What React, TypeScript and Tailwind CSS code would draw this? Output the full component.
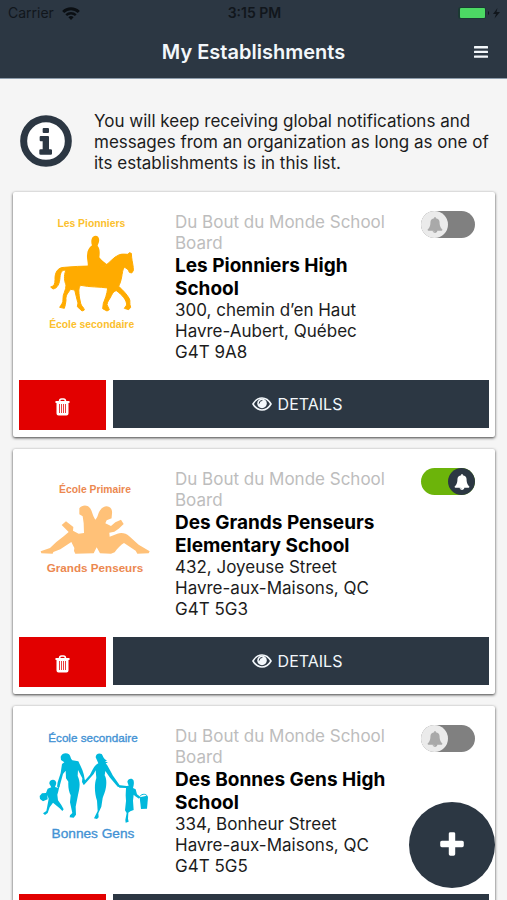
import React, { useState } from "react";

interface Establishment {
  id: string;
  board: string;
  name: string;
  street: string;
  city: string;
  postalCode: string;
  notify: boolean;
  logo: () => React.ReactElement;
}

function PionniersLogo() {
  return (
    <svg viewBox="69 87 360 360" className="w-30 h-30" role="img" aria-label="Les Pionniers">
      <g fill="#fbc02d" fontFamily="Liberation Sans, Arial, sans-serif" fontWeight="bold" fontSize="31" textAnchor="middle">
        <text x="244" y="126">Les Pionniers</text>
        <text x="245" y="429">École secondaire</text>
      </g>
      <g fill="#ffab00">
        {/* Rider */}
        <path d="M256 152C266 152 269 161 267 170C266 176 263 178 263 183C270 190 270 204 268 217C274 226 283 231 290 237L284 244L232 246C236 236 230 226 231 211C232 196 237 187 246 181C242 172 243 153 256 152Z" />
        {/* Horse */}
        <path d="M122 306C132 304 135 297 135 284C134 263 143 247 163 247C190 245 215 243 240 243L268 243L282 244C300 234 308 217 328 209C338 206 347 208 354 208L358 203L364 205L365 217C366 230 371 245 370 257L365 264L358 262C356 255 350 249 343 247C338 252 337 265 335 276C333 287 330 296 326 304C339 316 350 327 358 341C362 349 357 354 362 367L356 374L343 370L350 360C350 345 337 330 319 317C313 317 308 324 304 332C300 342 292 348 291 359L298 374L291 378L278 371L280 355C285 342 291 328 293 309C268 305 240 307 212 301C204 310 207 321 208 336L212 355C213 363 222 367 223 375L216 378L202 365L204 354C200 342 197 326 194 315L182 313C174 323 166 332 168 346L166 359L163 370L149 367C153 359 160 354 159 342C157 329 169 315 168 300C163 288 161 273 167 257C157 252 151 263 150 277C149 295 143 310 129 312Z" stroke="#ffab00" strokeWidth="3" strokeLinejoin="round" />
      </g>
    </svg>
  );
}

function PenseursLogo() {
  return (
    <svg viewBox="69 78 360 360" className="w-30 h-30" role="img" aria-label="Grands Penseurs">
      <g fill="#ec8850" fontFamily="Liberation Sans, Arial, sans-serif" fontWeight="bold" textAnchor="middle">
        <text x="255" y="144" fontSize="31">École Primaire</text>
        <text x="255" y="381" fontSize="35">Grands Penseurs</text>
      </g>
      {/* Two readers sitting back to back */}
      <path
        fill="#ffc178"
        d="M208 190C216 179 232 179 239 188C247 197 247 211 256 224C265 216 263 205 271 195C281 181 297 181 304 192C309 202 304 212 305 220L290 226L286 235L303 243L316 232L333 224L341 237L326 251L313 260L298 263L299 275L322 266C335 262 349 265 357 273L386 299L419 319L416 325L382 326L377 317L342 294C333 299 323 309 314 322L303 326L270 325L260 307L251 325L196 326L192 318L193 309L184 291L151 313L130 321L128 326L94 325L92 319L120 309L139 291L162 273L176 261L155 240L168 229L190 246L189 257L206 266L222 264L221 235L218 214L208 208Z"
      />
    </svg>
  );
}

function BonnesGensLogo() {
  return (
    <svg viewBox="69 84 360 360" className="w-30 h-30" role="img" aria-label="Bonnes Gens">
      <g fill="#4292d4" stroke="#4292d4" fontFamily="Liberation Sans, Arial, sans-serif" textAnchor="middle">
        <text x="249" y="125" fontSize="35">École secondaire</text>
        <text x="249" y="415" fontSize="41">Bonnes Gens</text>
      </g>
      <g fill="#00b8dc">
        {/* Father */}
        <path d="M152 170C156 159 169 157 177 163C183 169 181 177 187 181L205 184C213 200 222 217 224 238L228 247L221 255L216 246L217 235L204 210L203 228C213 250 208 266 204 285L197 320L198 344L191 353L179 352L180 346L187 339L180 307L182 286C177 275 174 263 175 245L168 235L167 212L159 222L148 262L141 260L143 247L152 219L156 192L163 187L153 180Z" />
        {/* Mother */}
        <path d="M257 172C257 162 266 158 275 162C281 170 280 178 292 181L285 184L294 188L287 190C293 197 300 210 308 226L328 254L330 262L323 260L299 232L286 213L284 226C289 234 290 246 288 261C286 276 280 287 278 294L274 320L265 340L266 352L261 357L252 355L263 333L261 302C253 277 253 252 259 234L257 211L251 222L230 246L222 254L220 247L240 224C248 211 251 198 265 190Z" />
        {/* Boy */}
        <path d="M118 251C117 241 129 236 136 242C142 249 136 257 135 261L143 263L149 255L145 274L142 284L144 301L154 315L161 328L157 333L149 325L129 308L119 322L113 339L105 345L99 340L109 333L112 318L116 296L112 285L113 298L99 304L90 297L89 288L96 280L108 279L113 266L124 262Z" />
        {/* Girl */}
        <path d="M352 245C354 235 367 233 371 242C373 251 370 259 369 264L377 268L381 283L389 289L387 296L376 289L371 284L369 302L371 330L361 334L355 338L354 356L356 365L347 368L346 360L350 339L345 331L348 303L347 286L348 264L328 263L325 255L350 258L356 257Z" />
        {/* Bucket */}
        <path d="M389 292L411 287L414 292L411 326L393 327Z" />
        <path d="M388 294C389 281 410 279 412 290" fill="none" stroke="#00b8dc" strokeWidth="3" />
      </g>
    </svg>
  );
}

const ESTABLISHMENTS: Establishment[] = [
  {
    id: "pionniers",
    board: "Du Bout du Monde School Board",
    name: "Les Pionniers High School",
    street: "300, chemin d’en Haut",
    city: "Havre-Aubert, Québec",
    postalCode: "G4T 9A8",
    notify: false,
    logo: PionniersLogo
  },
  {
    id: "penseurs",
    board: "Du Bout du Monde School Board",
    name: "Des Grands Penseurs Elementary School",
    street: "432, Joyeuse Street",
    city: "Havre-aux-Maisons, QC",
    postalCode: "G4T 5G3",
    notify: true,
    logo: PenseursLogo
  },
  {
    id: "bonnes-gens",
    board: "Du Bout du Monde School Board",
    name: "Des Bonnes Gens High School",
    street: "334, Bonheur Street",
    city: "Havre-aux-Maisons, QC",
    postalCode: "G4T 5G5",
    notify: false,
    logo: BonnesGensLogo
  }
];

function Icon({ d, className }: { d: string; className: string }) {
  return (
    <svg viewBox="0 0 1792 1792" fill="currentColor" aria-hidden="true" className={className}>
      <path d={d} />
    </svg>
  );
}

const BELL =
  "M912 1696q0-16-16-16-59 0-101.5-42.5T752 1536q0-16-16-16t-16 16q0 73 51.5 124.5T896 1712q16 0 16-16zm816-288q0 52-38 90t-90 38h-448q0 106-75 181t-181 75-181-75-75-181H192q-52 0-90-38t-38-90q50-42 91-88t85-119.5 74.5-158.5 50-206T384 576q0-152 117-282.5T808 135q-8-19-8-39 0-40 28-68t68-28 68 28 28 68q0 20-8 39 190 28 307 158.5T1408 576q0 139 19.5 260t50 206 74.5 158.5 85 119.5 91 88z";
const PLUS =
  "M1600 736v192q0 40-28 68t-68 28h-416v416q0 40-28 68t-68 28h-192q-40 0-68-28t-28-68v-416h-416q-40 0-68-28t-28-68v-192q0-40 28-68t68-28h416v-416q0-40 28-68t68-28h192q40 0 68 28t28 68v416h416q40 0 68 28t28 68z";

function EyeIcon() {
  return (
    <svg viewBox="0 0 20 14" className="w-5 h-3.5" aria-hidden="true">
      <path
        d="M1 7C3 3.5 6 1 10 1S17 3.5 19 7C17 10.500 14 13 10 13S3 10.500 1 7Z"
        fill="none"
        stroke="currentColor"
        strokeWidth="1.6"
      />
      <circle cx="10" cy="6.4" r="4.8" fill="currentColor" />
      <path d="M7.2 6.2A2.8 2.8 0 0 1 10 3.4" fill="none" stroke="#2c3743" strokeWidth="1" strokeLinecap="round" />
    </svg>
  );
}

function TrashIcon() {
  return (
    <svg viewBox="0 0 15 18" className="w-[15px] h-[18px]" aria-hidden="true">
      <path d="M4.5 3.5C4.5 1.5 5.5 1 6.5 1H8.5C9.5 1 10.5 1.5 10.5 3.5" fill="none" stroke="currentColor" strokeWidth="1.5" />
      <path
        d="M0.5 3H14.5V5H13.5V15.5Q13.5 17.5 11.5 17.5H3.5Q1.5 17.5 1.5 15.5V5H0.5Z"
        fill="currentColor"
      />
      <path d="M4.5 6V15M6.5 6V15M8.5 6V15M10.5 6V15" stroke="#e20000" strokeWidth="1" strokeOpacity="0.75" />
    </svg>
  );
}

function StatusBar() {
  return (
    <div className="grid grid-cols-3 items-center h-[26px] pl-2 pr-1.5 text-[#11161c]">
      <div className="flex items-center gap-2 text-sm">
        <span>Carrier</span>
        <svg viewBox="0 0 18 13" className="w-[18px] h-[13px]" fill="none" stroke="#0b0f13" strokeWidth="3" aria-hidden="true">
          <path d="M1.2 5A11 11 0 0 1 16.8 5" />
          <path d="M4.2 8.2A7 7 0 0 1 13.8 8.2" strokeWidth="2.4" />
          <path d="M6.4 10.2A4 4 0 0 1 11.6 10.2L9 13Z" fill="#0b0f13" stroke="none" />
        </svg>
      </div>
      <span className="text-center text-sm font-semibold">3:15 PM</span>
      <svg viewBox="0 0 44 14" className="w-11 h-3.5 justify-self-end" aria-hidden="true">
        <rect x="1" y="1" width="28" height="12" rx="3" fill="#1b3a33" />
        <rect x="3" y="2" width="25" height="10" rx="1" fill="#4cd964" />
        <path d="M31 5V9C32.4 8.5 32.4 5.5 31 5Z" fill="#11161c" />
        <path d="M40.5 2L36 8H39L37.5 12.5L43 6H39.5Z" fill="#11161c" />
      </svg>
    </div>
  );
}

function Header() {
  return (
    <header className="shrink-0 bg-[#2c3743] border-b border-[#8d9cab]">
      <StatusBar />
      <div className="grid grid-cols-[1fr_auto_1fr] items-center h-[52px] px-[19px]">
        <h1 className="col-start-2 text-xl font-semibold text-[#f3f7fb]">My Establishments</h1>
        <button type="button" aria-label="Menu" className="justify-self-end cursor-pointer">
          <svg viewBox="0 0 14 12" className="w-3.5 h-3" fill="#f3f7fb" aria-hidden="true">
            <rect x="0" y="0" width="14" height="2.4" rx="0.5" />
            <rect x="0" y="4.7" width="14" height="2.4" rx="0.5" />
            <rect x="0" y="9.4" width="14" height="2.4" rx="0.5" />
          </svg>
        </button>
      </div>
    </header>
  );
}

function NotificationSwitch({ label, initial }: { label: string; initial: boolean }) {
  const [on, setOn] = useState(initial);

  return (
    <label
      className={`flex shrink-0 w-[54px] h-[27px] rounded-full cursor-pointer ${
        on ? "justify-end bg-[#6cb40a]" : "justify-start bg-[#808080]"
      }`}
    >
      <input
        type="checkbox"
        role="switch"
        aria-label={label}
        checked={on}
        onChange={(e) => setOn(e.target.checked)}
        className="sr-only"
      />
      <span
        className={`flex items-center justify-center w-[27px] h-[27px] rounded-full ${
          on ? "bg-[#2c3743] text-white" : "bg-[#ebebeb] text-[#a9a9a9]"
        }`}
      >
        <Icon d={BELL} className="w-4 h-4" />
      </span>
    </label>
  );
}

function EstablishmentCard({ item }: { item: Establishment }) {
  const Logo = item.logo;

  return (
    <li className="bg-white px-1.5 pt-[19px] pb-[7px] rounded-xs shadow-[0_1px_3px_rgba(0,0,0,0.75)]">
      <div className="flex items-start min-h-[169px]">
        <div className="shrink-0 w-[156px] pt-[3px] pl-3.5">
          <Logo />
        </div>
        <div className="flex-1 min-w-0 pt-px text-[17px] text-[#1c1c1c]">
          <p className="leading-[21px] text-[#bdbdbd]">{item.board}</p>
          <h2 className="text-[19px] leading-[23px] font-bold text-black">{item.name}</h2>
          <address className="not-italic leading-[21px]">
            {item.street}
            <br />
            {item.city}
            <br />
            {item.postalCode}
          </address>
        </div>
        <div className="shrink-0 pl-3 pr-3.5">
          <NotificationSwitch label={`Notifications for ${item.name}`} initial={item.notify} />
        </div>
      </div>

      <div className="flex items-start gap-[7px]">
        <button
          type="button"
          aria-label={`Remove ${item.name}`}
          className="flex items-center justify-center w-[87px] h-[50px] pt-1 bg-[#e20000] text-white cursor-pointer"
        >
          <TrashIcon />
        </button>
        <button
          type="button"
          className="flex flex-1 items-center justify-center gap-1.5 h-12 pr-2 bg-[#2c3743] text-base text-[#f3f7fb] cursor-pointer"
        >
          <EyeIcon />
          DETAILS
        </button>
      </div>
    </li>
  );
}

export default function App() {
  return (
    <div className="flex flex-col h-screen bg-[#f5f5f5] font-['Inter','Liberation_Sans',sans-serif]">
      <Header />

      <main className="flex-1 min-h-0 overflow-y-auto pl-[13px] pr-3 pb-3 [scrollbar-width:none]">
        <div className="flex items-start gap-[22px] pl-[7px] pt-8 pb-[18px]">
          <svg viewBox="60 348 156 156" className="shrink-0 w-[52px] h-[52px] mt-1" aria-hidden="true">
            <circle cx="138" cy="426" r="67" fill="#fff" stroke="#2c3743" strokeWidth="21" />
            <path
              d="M131 387H144Q147 387 147 390V399Q147 402 144 402H131Q128 402 128 399V390Q128 387 131 387ZM122 411H144Q147 411 147 414V451H152Q156 451 156 454V464Q156 467 152 467H122Q118 467 118 464V454Q118 451 122 451H128V427H122Q119 427 119 424V414Q119 411 122 411Z"
              fill="#2c3743"
            />
          </svg>
          <p className="text-[17px] leading-[21px] text-[#1c1c1c]">
            You will keep receiving global notifications and messages from an organization as long as one of its
            establishments is in this list.
          </p>
        </div>

        <ul className="space-y-3">
          {ESTABLISHMENTS.map((item) => (
            <EstablishmentCard key={item.id} item={item} />
          ))}
        </ul>
      </main>

      <button
        type="button"
        aria-label="Add an establishment"
        className="fixed right-3 bottom-3 flex items-center justify-center w-[86px] h-[86px] rounded-full bg-[#2c3743] text-white cursor-pointer"
      >
        <Icon d={PLUS} className="w-[30px] h-[30px]" />
      </button>
    </div>
  );
}
